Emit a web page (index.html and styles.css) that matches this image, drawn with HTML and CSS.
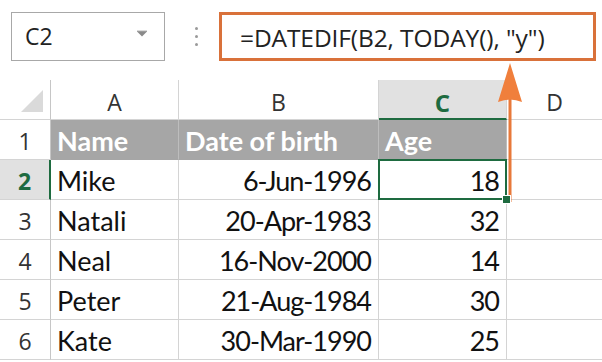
FILE: index.html
```html
<!DOCTYPE html>
<html>
<head>
<meta charset="utf-8">
<link rel="stylesheet" href="styles.css">
</head>
<body>
<div class="page">
  <div class="toolbar">
    <div class="namebox">
      <span class="ref">C2</span>
      <svg class="dd" width="12" height="8" viewBox="0 0 12 8"><path d="M1 1.5 H11 L6 6.5 Z" fill="#8a8a8a"/><path d="M1 1.2 H11" stroke="#8a8a8a" stroke-width="1"/></svg>
    </div>
    <div class="dots"><i></i><i></i><i></i></div>
    <div class="formula">=DATEDIF(B2, TODAY(), "y")</div>
  </div>

  <div class="sheet">
    <div class="corner"><svg width="22" height="22" viewBox="0 0 22 22"><path d="M22 0 V22 H0 Z" fill="#dadada"/></svg></div>
    <div class="colhead">A</div>
    <div class="colhead">B</div>
    <div class="colhead sel">C</div>
    <div class="colhead last">D</div>

    <div class="rowhead">1</div>
    <div class="cell th">Name</div>
    <div class="cell th">Date of birth</div>
    <div class="cell th">Age</div>
    <div class="cell last"></div>

    <div class="rowhead sel">2</div>
    <div class="cell">Mike</div>
    <div class="cell num">6-Jun-1996</div>
    <div class="cell num active">18<span class="handle"></span></div>
    <div class="cell last"></div>

    <div class="rowhead">3</div>
    <div class="cell">Natali</div>
    <div class="cell num">20-Apr-1983</div>
    <div class="cell num">32</div>
    <div class="cell last"></div>

    <div class="rowhead">4</div>
    <div class="cell">Neal</div>
    <div class="cell num">16-Nov-2000</div>
    <div class="cell num">14</div>
    <div class="cell last"></div>

    <div class="rowhead">5</div>
    <div class="cell">Peter</div>
    <div class="cell num">21-Aug-1984</div>
    <div class="cell num">30</div>
    <div class="cell last"></div>

    <div class="rowhead">6</div>
    <div class="cell">Kate</div>
    <div class="cell num">30-Mar-1990</div>
    <div class="cell num">25</div>
    <div class="cell last"></div>
  </div>

  <svg class="arrow" width="26" height="142" viewBox="0 0 26 142">
    <rect x="10.5" y="30" width="3" height="110" fill="#e8793a"/>
    <path d="M12 1 L24 40 Q12 35 0 40 Z" fill="#f07f3c"/>
  </svg>
</div>
</body>
</html>
```
FILE: styles.css
```css
html, body {
  margin: 0;
  padding: 0;
  background: #ffffff;
}

.page {
  position: relative;
  width: 602px;
  height: 362px;
  overflow: hidden;
}

.toolbar {
  display: flex;
  align-items: center;
  padding: 12px 6px 0 11px;
  height: 49px;
}

.namebox {
  box-sizing: border-box;
  width: 154px;
  height: 49px;
  border: 1px solid #a8a8a8;
  display: flex;
  align-items: center;
  justify-content: space-between;
  padding: 0 16px 2px 13px;
  font-family: "Open Sans", "Noto Sans", sans-serif;
  font-size: 23px;
  color: #222;
}

.namebox .dd {
  margin-bottom: 4px;
}

.dots {
  width: 54px;
  display: flex;
  flex-direction: column;
  align-items: center;
  gap: 5px;
  padding-left: 8px;
  box-sizing: border-box;
}

.dots i {
  display: block;
  width: 3px;
  height: 3px;
  border-radius: 50%;
  background: #9a9a9a;
}

.formula {
  box-sizing: border-box;
  flex: 1;
  height: 49px;
  border: 3px solid #d9713a;
  display: flex;
  align-items: center;
  padding: 2px 0 0 18px;
  font-family: "Open Sans", "Noto Sans", sans-serif;
  font-size: 24.5px;
  color: #222;
  letter-spacing: -0.1px;
}

.sheet {
  margin-top: 19px;
  display: grid;
  grid-template-columns: 51px 128px 200px 128px 1fr;
  grid-auto-rows: 40px;
}

.corner {
  box-sizing: border-box;
  border-right: 1px solid #c6c6c6;
  border-bottom: 1px solid #d4d4d4;
  display: flex;
  align-items: flex-end;
  justify-content: flex-end;
  padding: 0 7px 7px 0;
}

.colhead {
  box-sizing: border-box;
  border-right: 1px solid #d4d4d4;
  border-bottom: 1px solid #d4d4d4;
  display: flex;
  align-items: center;
  justify-content: center;
  font-family: "Open Sans", "Noto Sans", sans-serif;
  font-size: 23px;
  color: #333;
  padding-top: 4px;
}

.colhead.sel {
  background: #e1e1e1;
  border-bottom: 2px solid #1e6b40;
  color: #1e6b40;
  font-weight: 700;
  font-size: 24px;
  padding-top: 6px;
}

.colhead.last,
.cell.last {
  border-right: none;
}

.rowhead {
  box-sizing: border-box;
  border-right: 1px solid #c6c6c6;
  border-bottom: 1px solid #d4d4d4;
  display: flex;
  align-items: center;
  justify-content: center;
  font-family: "Open Sans", "Noto Sans", sans-serif;
  font-size: 23px;
  color: #333;
  padding-top: 2px;
}

.rowhead.sel {
  background: #e1e1e1;
  border-right: 2px solid #1e6b40;
  color: #1e6b40;
  font-weight: 700;
}

.cell {
  box-sizing: border-box;
  position: relative;
  border-right: 1px solid #d4d4d4;
  border-bottom: 1px solid #d4d4d4;
  display: flex;
  align-items: center;
  padding: 2px 6px 0 6px;
  font-family: "Lato", "Liberation Sans", sans-serif;
  font-size: 27px;
  color: #111;
}

.cell.th {
  background: #a6a6a6;
  color: #ffffff;
  font-weight: 700;
  border-right-color: #bdbdbd;
  border-bottom-color: #a6a6a6;
}

.cell.num {
  justify-content: flex-end;
  letter-spacing: -1px;
  padding-right: 7px;
}

.cell.active::after {
  content: "";
  position: absolute;
  left: -1px;
  top: -1px;
  right: -1px;
  bottom: -1px;
  border: 2px solid #1e6b40;
}

.handle {
  position: absolute;
  right: -5px;
  bottom: -5px;
  width: 7px;
  height: 7px;
  background: #1e6b40;
  border: 1px solid #ffffff;
  z-index: 2;
}

.arrow {
  position: absolute;
  left: 498px;
  top: 62px;
}
```
